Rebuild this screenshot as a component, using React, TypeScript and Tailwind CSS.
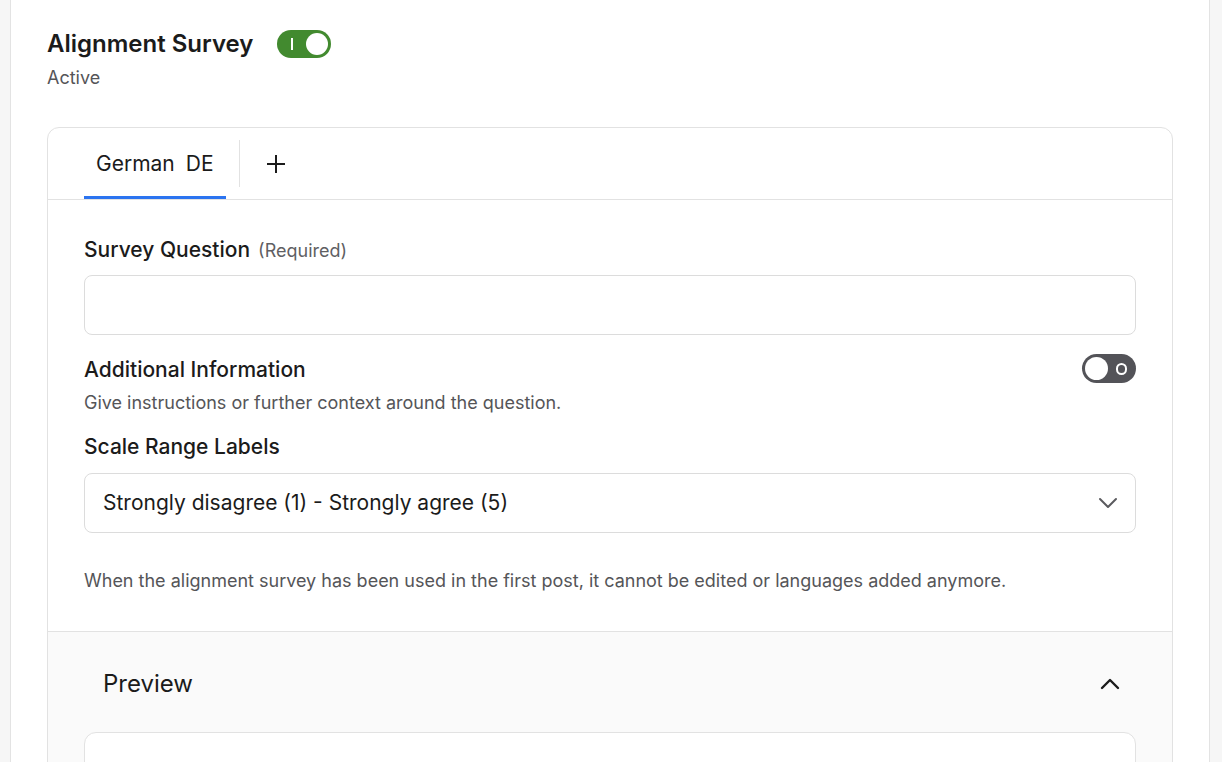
import React from "react";

function ToggleOn() {
  return (
    <div className="relative flex h-[28px] w-[54px] shrink-0 items-center rounded-full bg-[#428a2f]">
      <span className="ml-[14px] h-[12px] w-[2px] bg-white" />
      <span className="absolute right-[3px] top-[3px] h-[22px] w-[22px] rounded-full bg-white" />
    </div>
  );
}

function ToggleOff() {
  return (
    <div className="relative flex h-[29px] w-[54px] shrink-0 items-center justify-end rounded-full bg-[#535358] pr-[9px]">
      <span className="h-[12px] w-[11px] rounded-full border-2 border-white" />
      <span className="absolute left-[3px] top-[3px] h-[23px] w-[23px] rounded-full bg-white" />
    </div>
  );
}

export default function App() {
  return (
    <div
      className="min-h-[762px] bg-[#f6f6f6] pl-[10px] pr-[12px]"
      style={{ fontFamily: "Inter, 'Noto Sans', sans-serif" }}
    >
      <div className="min-h-[762px] border-x border-[#e3e3e3] bg-white px-[36px] pt-[28px]">
        <div className="flex h-[32px] items-center gap-[24px]">
          <h1 className="text-[24px] font-semibold leading-[32px] text-[#1b1b1b]">Alignment Survey</h1>
          <ToggleOn />
        </div>
        <div className="mt-[6px] text-[18px] leading-[24px] text-[#555558]">Active</div>

        <div className="mt-[37px] rounded-t-[12px] border border-[#e2e2e2]">
          <div className="flex h-[72px] items-stretch border-b border-[#e2e2e2] pl-[36px]">
            <div className="relative flex items-center px-[12px] text-[21px] leading-[28px] text-[#1b1b1b]">
              <span>German</span>
              <span className="ml-[11px]">DE</span>
              <span className="absolute bottom-0 left-0 right-0 h-[3px] bg-[#2b74f0]" />
            </div>
            <div className="my-[12px] ml-[13px] w-px bg-[#e2e2e2]" />
            <div className="flex items-center pl-[25px]">
              <svg width="22" height="22" viewBox="0 0 22 22" fill="none" stroke="#1b1b1b" strokeWidth="2">
                <path d="M11 2v18M2 11h18" />
              </svg>
            </div>
          </div>

          <div className="px-[36px] pb-[38px] pt-[36px]">
            <div className="flex h-[28px] items-baseline gap-[8px]">
              <span className="text-[21px] font-medium leading-[28px] text-[#1b1b1b]">Survey Question</span>
              <span className="text-[18px] leading-[28px] text-[#5f5f63]">(Required)</span>
            </div>
            <div className="mt-[11px] h-[60px] rounded-[8px] border border-[#dcdcdc]" />

            <div className="mt-[19px] flex items-start justify-between">
              <div>
                <div className="mt-[2px] text-[21px] font-medium leading-[28px] text-[#1b1b1b]">Additional Information</div>
                <div className="mt-[7px] text-[18px] leading-[24px] text-[#555558]">Give instructions or further context around the question.</div>
              </div>
              <ToggleOff />
            </div>

            <div className="mt-[18px] text-[21px] font-medium leading-[28px] text-[#1b1b1b]">Scale Range Labels</div>
            <div className="mt-[12px] flex h-[60px] items-center justify-between rounded-[8px] border border-[#dcdcdc] pl-[18px] pr-[16px]">
              <span className="text-[21px] leading-[28px] text-[#1b1b1b]">Strongly disagree (1) - Strongly agree (5)</span>
              <svg width="22" height="22" viewBox="0 0 22 22" fill="none" stroke="#5a5a5e" strokeWidth="2" strokeLinecap="round" strokeLinejoin="round">
                <path d="M3 7l8 8 8-8" />
              </svg>
            </div>

            <div className="mt-[36px] text-[18px] leading-[24px] text-[#555558]">
              When the alignment survey has been used in the first post, it cannot be edited or languages added anymore.
            </div>
          </div>

          <div className="border-t border-[#e2e2e2] bg-[#fafafa] px-[36px] pt-[36px]">
            <div className="flex h-[32px] items-center justify-between pl-[19px] pr-[16px]">
              <span className="text-[24px] leading-[32px] text-[#1b1b1b]">Preview</span>
              <svg width="20" height="20" viewBox="0 0 20 20" fill="none" stroke="#1b1b1b" strokeWidth="2.4" strokeLinecap="round" strokeLinejoin="round">
                <path d="M2 14l8-8 8 8" />
              </svg>
            </div>
            <div className="mt-[32px] h-[60px] rounded-t-[12px] border border-[#e2e2e2] bg-white" />
          </div>
        </div>
      </div>
    </div>
  );
}
